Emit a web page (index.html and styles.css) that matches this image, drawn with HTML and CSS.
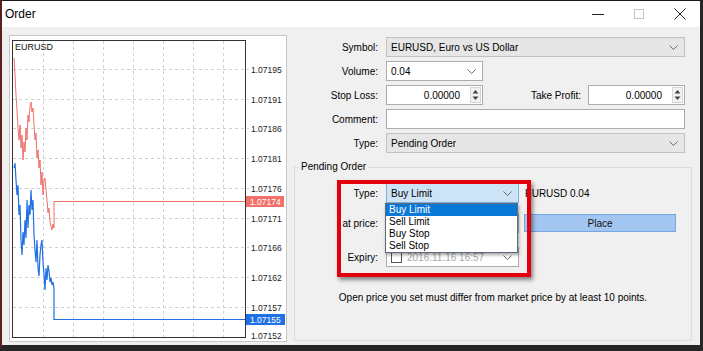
FILE: index.html
```html
<!DOCTYPE html>
<html lang="en">
<head>
    <meta charset="UTF-8">
    <title>Order</title>
    <link rel="stylesheet" href="styles.css">
</head>
<body>
    <div class="window">
        <div class="titlebar">
            <span class="title">Order</span>
            <div class="controls">
                <span class="ctl"><svg width="12" height="12"><path d="M0 6.5h12" stroke="#222" fill="none"/></svg></span>
                <span class="ctl"><svg width="12" height="12"><rect x="1.5" y="1.5" width="9" height="9" fill="none" stroke="#c4c4c4"/></svg></span>
                <span class="ctl"><svg width="12" height="12"><path d="M0.5 0.5l11 11M11.5 0.5l-11 11" stroke="#222" fill="none"/></svg></span>
            </div>
        </div>

        <div class="body">
            <div class="chart">
                <svg width="276" height="305" viewBox="10 36 276 305">
                    <g stroke="#cfcfcf" stroke-dasharray="3 3">
                        <line x1="13" y1="69.5" x2="249" y2="69.5"/>
                        <line x1="13" y1="99.5" x2="249" y2="99.5"/>
                        <line x1="13" y1="128.5" x2="249" y2="128.5"/>
                        <line x1="13" y1="158.5" x2="249" y2="158.5"/>
                        <line x1="13" y1="188.5" x2="249" y2="188.5"/>
                        <line x1="13" y1="218.5" x2="249" y2="218.5"/>
                        <line x1="13" y1="247.5" x2="249" y2="247.5"/>
                        <line x1="13" y1="277.5" x2="249" y2="277.5"/>
                        <line x1="13" y1="307.5" x2="249" y2="307.5"/>
                        <line x1="43.5" y1="41" x2="43.5" y2="337"/>
                        <line x1="73.5" y1="41" x2="73.5" y2="337"/>
                        <line x1="103.5" y1="41" x2="103.5" y2="337"/>
                        <line x1="133.5" y1="41" x2="133.5" y2="337"/>
                        <line x1="163.5" y1="41" x2="163.5" y2="337"/>
                        <line x1="193.5" y1="41" x2="193.5" y2="337"/>
                        <line x1="223.5" y1="41" x2="223.5" y2="337"/>
                    </g>

                    <polyline fill="none" stroke="#f0716a" stroke-width="1"
                        points="14,58 15,75 16,95 17,110 18,128 19,140 20,125 21,148 22,135 23,160 24,142 25,152 26,128 27,140 28,115 29,122 30,106 31,102 32,112 33,108 34,125 35,140 36,133 37,158 38,150 39,168 40,160 41,185 42,172 43,195 44,180 45,178 46,190 47,200 48,213 49,208 50,222 51,226 52,230 53,224 54,228 54,201.5 245,201.5"/>
                    <polyline fill="none" stroke="#1f6fe5" stroke-width="1.2"
                        points="14,168 15,163 16,180 17,195 18,185 19,215 20,205 21,240 22,255 23,232 24,245 25,220 26,238 27,200 28,228 29,205 30,215 31,190 32,210 33,200 34,235 35,250 36,262 37,240 38,268 39,276 40,255 41,245 42,240 43,262 44,275 45,290 46,268 47,280 48,265 49,271 50,282 51,278 52,285 53,282 54,288 54,319.5 245,319.5"/>

                    <rect x="12.5" y="40.5" width="233" height="297" fill="none" stroke="#333"/>
                    <text class="sym" x="15" y="50">EURUSD</text>

                    <g class="axis">
                        <text x="251" y="72.5">1.07195</text>
                        <text x="251" y="102.5">1.07191</text>
                        <text x="251" y="131.5">1.07186</text>
                        <text x="251" y="161.5">1.07181</text>
                        <text x="251" y="191.5">1.07176</text>
                        <text x="251" y="221.5">1.07171</text>
                        <text x="251" y="250.5">1.07166</text>
                        <text x="251" y="280.5">1.07162</text>
                        <text x="251" y="310.5">1.07157</text>
                        <text x="251" y="338.5">1.07152</text>
                    </g>
                    <rect x="246" y="196" width="38" height="11" fill="#f0706a"/>
                    <text class="tag" x="250" y="204.5">1.07174</text>
                    <rect x="246" y="314" width="39" height="11" fill="#1f6fe5"/>
                    <text class="tag" x="250" y="322.5">1.07155</text>
                </svg>
            </div>

            <div class="form">
                <div class="row">
                    <label>Symbol:</label>
                    <div class="combo disabled">EURUSD, Euro vs US Dollar<svg class="chev" width="9" height="5"><path d="M0.5 0.5l4 4 4-4"/></svg></div>
                </div>
                <div class="row">
                    <label>Volume:</label>
                    <div class="combo short">0.04<svg class="chev" width="9" height="5"><path d="M0.5 0.5l4 4 4-4"/></svg></div>
                </div>
                <div class="row">
                    <label>Stop Loss:</label>
                    <div class="pair">
                        <div class="spin"><span class="val">0.00000</span><span class="arrows"><svg width="7" height="12"><path d="M3.5 1l3 3.5h-6zM3.5 11l3-3.5h-6z" fill="#444"/></svg></span></div>
                        <label class="tp-label">Take Profit:</label>
                        <div class="spin"><span class="val">0.00000</span><span class="arrows"><svg width="7" height="12"><path d="M3.5 1l3 3.5h-6zM3.5 11l3-3.5h-6z" fill="#444"/></svg></span></div>
                    </div>
                </div>
                <div class="row">
                    <label>Comment:</label>
                    <div class="combo"></div>
                </div>
                <div class="row">
                    <label>Type:</label>
                    <div class="combo disabled">Pending Order<svg class="chev" width="9" height="5"><path d="M0.5 0.5l4 4 4-4"/></svg></div>
                </div>

                <fieldset class="group">
                    <legend>Pending Order</legend>
                    <div class="group-body">
                        <div class="grow">
                            <label>Type:</label>
                            <div class="combo narrow focus">Buy Limit<svg class="chev" width="9" height="5"><path d="M0.5 0.5l4 4 4-4"/></svg></div>
                            <span class="lot">EURUSD 0.04</span>
                        </div>
                        <div class="grow price-row">
                            <label>at price:</label>
                            <div class="combo narrow"></div>
                            <button class="place">Place</button>
                        </div>
                        <div class="grow">
                            <label>Expiry:</label>
                            <div class="combo narrow expiry"><span class="check"></span><span class="date">2016.11.16 16:57</span><svg class="chev" width="9" height="5"><path d="M0.5 0.5l4 4 4-4"/></svg></div>
                        </div>
                        <p class="note">Open price you set must differ from market price by at least 10 points.</p>

                        <ul class="dropdown">
                            <li class="active">Buy Limit</li>
                            <li>Sell Limit</li>
                            <li>Buy Stop</li>
                            <li>Sell Stop</li>
                        </ul>
                        <div class="highlight"></div>
                    </div>
                </fieldset>
            </div>
        </div>
    </div>
</body>
</html>
```

FILE: styles.css
```css
* {
    box-sizing: border-box;
}
body {
    margin: 0;
    font-family: "Liberation Sans", Arial, sans-serif;
    font-size: 10px;
    color: #000;
    background: #fff;
}
.window {
    width: 703px;
    height: 351px;
    display: flex;
    flex-direction: column;
    border-top: 1px solid #1a1a1a;
    border-left: 2px solid #5b1f1f;
    border-right: 3px solid #262626;
    border-bottom: 6px solid #262626;
    background: #f0f0f0;
}
.titlebar {
    height: 26px;
    background: #fff;
    display: flex;
    align-items: center;
    justify-content: space-between;
}
.title {
    font-size: 12px;
    padding-left: 3px;
}
.controls {
    display: flex;
    height: 100%;
}
.ctl {
    width: 41px;
    display: flex;
    align-items: center;
    justify-content: center;
}

.body {
    flex: 1;
    display: flex;
    padding: 8px 0 0 7px;
}
.chart {
    width: 278px;
    height: 307px;
    background: #fff;
    border: 1px solid #c6c6c6;
}
.chart svg {
    display: block;
}
.sym {
    font-size: 9px;
    fill: #111;
}
.axis text {
    font-size: 8.5px;
    fill: #222;
}
.tag {
    font-size: 8.5px;
    fill: #fff;
}

.form {
    width: 398px;
    margin-left: 7px;
    padding-top: 2px;
    display: flex;
    flex-direction: column;
}
.row {
    display: grid;
    grid-template-columns: 84px 1fr;
    column-gap: 8px;
    align-items: center;
    height: 20px;
    margin-bottom: 4px;
    padding-right: 7px;
}
label {
    text-align: right;
    white-space: nowrap;
}
.combo {
    height: 20px;
    background: #fff;
    border: 1px solid #acacac;
    display: flex;
    align-items: center;
    justify-content: space-between;
    padding: 0 6px 0 4px;
    white-space: nowrap;
}
.combo.disabled {
    background: #e6e6e6;
    border-color: #c2c2c2;
}
.combo.short {
    width: 97px;
}
.chev path {
    fill: none;
    stroke: #6a6a6a;
}
.pair {
    display: flex;
    align-items: center;
}
.spin {
    width: 97px;
    height: 20px;
    background: #fff;
    border: 1px solid #acacac;
    display: flex;
    align-items: center;
    justify-content: flex-end;
}
.spin .val {
    padding-right: 10px;
}
.spin .arrows {
    width: 11px;
    height: 16px;
    margin-right: 1px;
    background: #f2f2f2;
    border: 1px solid #d6d6d6;
    display: flex;
    align-items: center;
    justify-content: center;
}
.tp-label {
    flex: 1;
    padding-right: 7px;
}

.group {
    flex: 1;
    margin: 4px 0 4px 0;
    padding: 0;
    border: 1px solid #dcdcdc;
    min-width: 0;
}
.group legend {
    padding: 0 2px;
    margin-left: 4px;
    line-height: 12px;
}
.group-body {
    position: relative;
    height: 100%;
    padding-top: 10px;
}
.grow {
    display: flex;
    align-items: center;
    height: 20px;
}
.grow label {
    width: 83px;
    margin-right: 8px;
}
.price-row {
    margin-top: 10px;
}
.price-row + .grow {
    margin-top: 14px;
}
.combo.narrow {
    width: 133px;
}
.combo.focus {
    background: #cde4f7;
    border-color: #7eaee0;
}
.lot {
    margin-left: 6px;
}
.place {
    margin-left: 5px;
    width: 152px;
    height: 18px;
    padding: 0;
    font-family: inherit;
    font-size: 10px;
    color: #111;
    background: #a3c6f1;
    border: 1px solid #77a6e0;
}
.expiry {
    justify-content: flex-start;
}
.check {
    width: 11px;
    height: 11px;
    border: 1px solid #555;
    background: #fff;
    margin-right: 5px;
}
.date {
    flex: 1;
    color: #a8a8a8;
}
.note {
    margin: 25px 0 0 0;
    text-align: center;
    line-height: 12px;
}
.dropdown {
    position: absolute;
    left: 90px;
    top: 30px;
    width: 133px;
    margin: 0;
    padding: 0;
    list-style: none;
    background: #fff;
    border: 1px solid #5f6b78;
    box-shadow: 1px 2px 3px rgba(0, 0, 0, 0.35);
}
.dropdown li {
    height: 12px;
    line-height: 12px;
    padding-left: 3px;
}
.dropdown li.active {
    background: #0a78d7;
    color: #fff;
}
.highlight {
    position: absolute;
    left: 42px;
    top: 7px;
    width: 194px;
    height: 97px;
    border: 4px solid #e3000b;
    box-shadow: 2px 3px 4px rgba(0, 0, 0, 0.45);
}
```
